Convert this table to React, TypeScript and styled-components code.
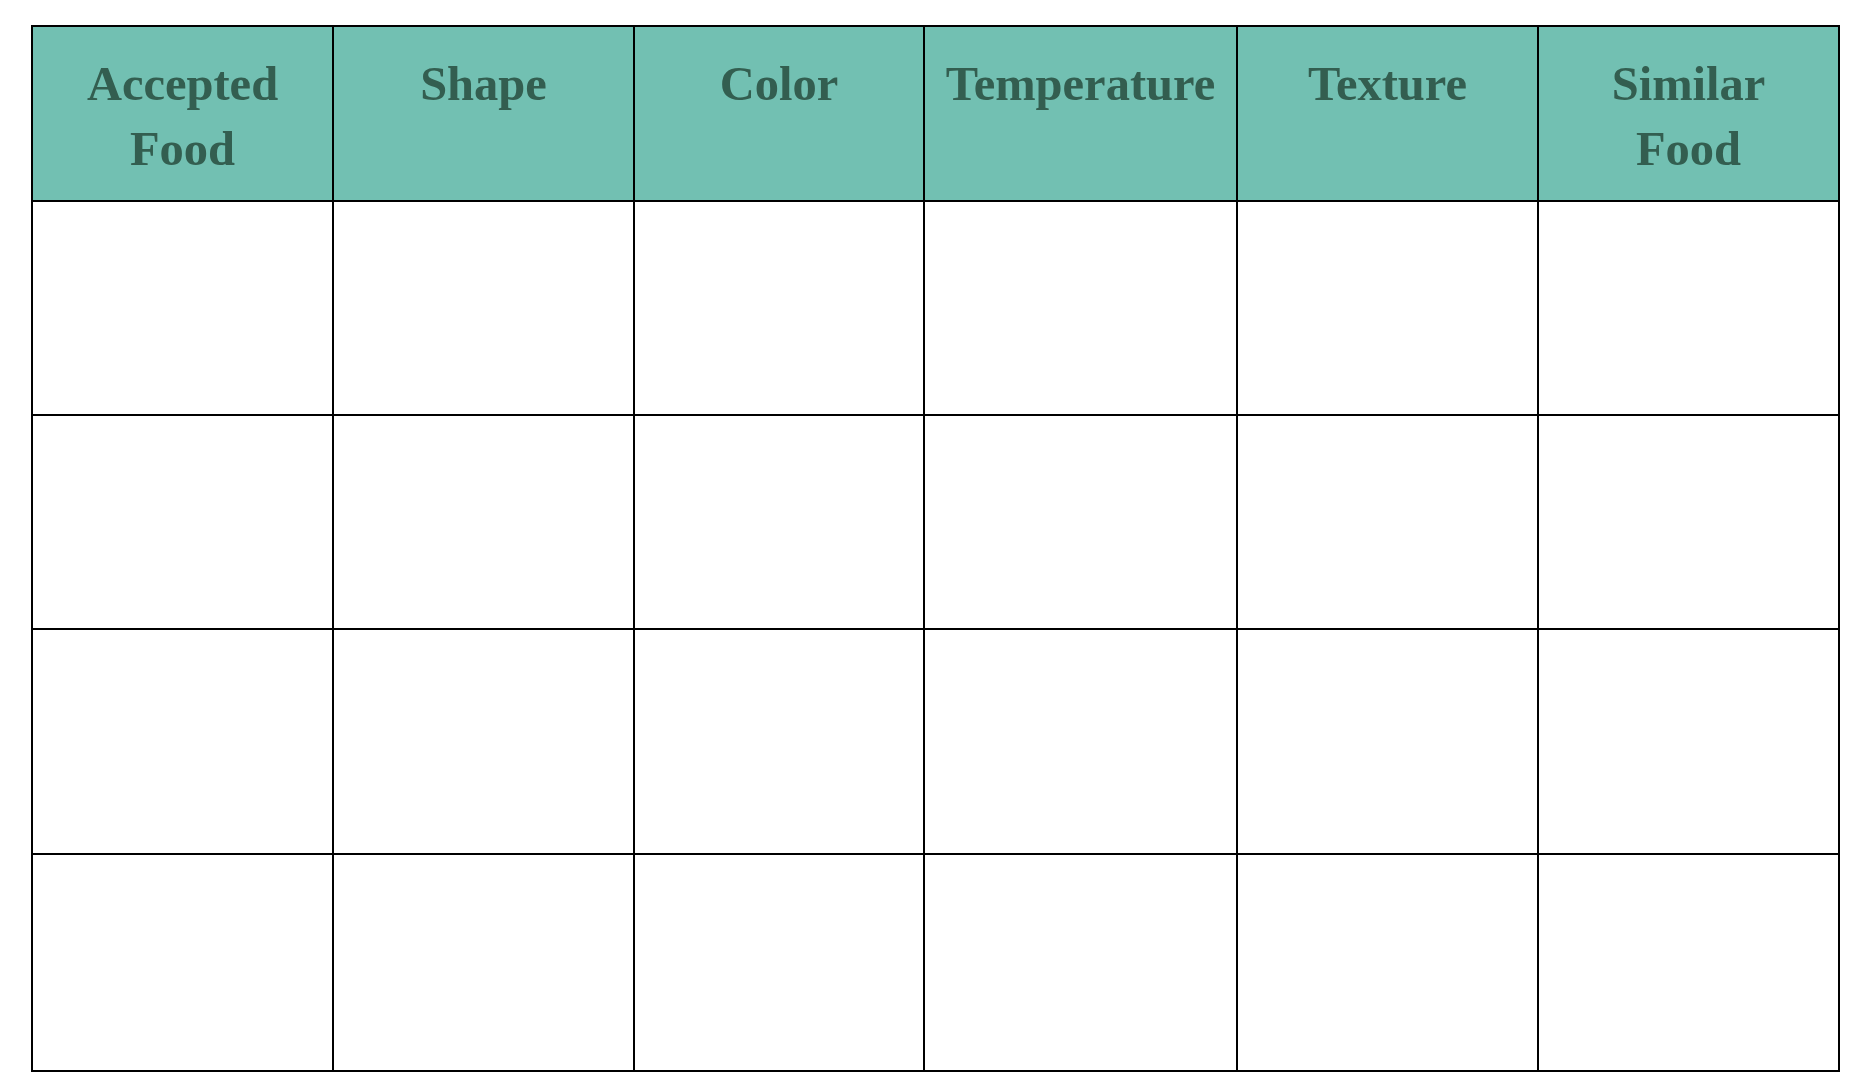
import React from "react";
import styled, { createGlobalStyle } from "styled-components";

const GlobalStyle = createGlobalStyle`
  html, body {
    margin: 0;
    padding: 0;
    background: #ffffff;
  }
  body {
    font-family: "Liberation Serif", "DejaVu Serif", serif;
  }
`;

const Page = styled.div`
  padding: 25px 0 0 31px;
  width: 1864px;
  height: 1092px;
  box-sizing: border-box;
  background: #ffffff;
`;

const Sheet = styled.div`
  display: grid;
  grid-template-columns: 299px 299px 288px 311px 299px 299px;
  grid-template-rows: 173px 212px 212px 223px 215px;
  gap: 2px;
  padding: 2px;
  width: max-content;
  background: #000000;
`;

const HeaderCell = styled.div`
  background: #72c0b2;
  color: #335e50;
  font-family: "Liberation Serif", "DejaVu Serif", serif;
  font-weight: 700;
  font-size: 48.5px;
  line-height: 65px;
  text-align: center;
  padding-top: 24px;
  box-sizing: border-box;
`;

const Cell = styled.div`
  background: #ffffff;
`;

const headers: React.ReactNode[] = [
  <>Accepted<br />Food</>,
  "Shape",
  "Color",
  "Temperature",
  "Texture",
  <>Similar<br />Food</>,
];

export default function App() {
  const rows = 4;
  return (
    <>
      <GlobalStyle />
      <Page>
        <Sheet>
          {headers.map((h, i) => (
            <HeaderCell key={`h${i}`}>{h}</HeaderCell>
          ))}
          {Array.from({ length: rows * headers.length }).map((_, i) => (
            <Cell key={`c${i}`} />
          ))}
        </Sheet>
      </Page>
    </>
  );
}
